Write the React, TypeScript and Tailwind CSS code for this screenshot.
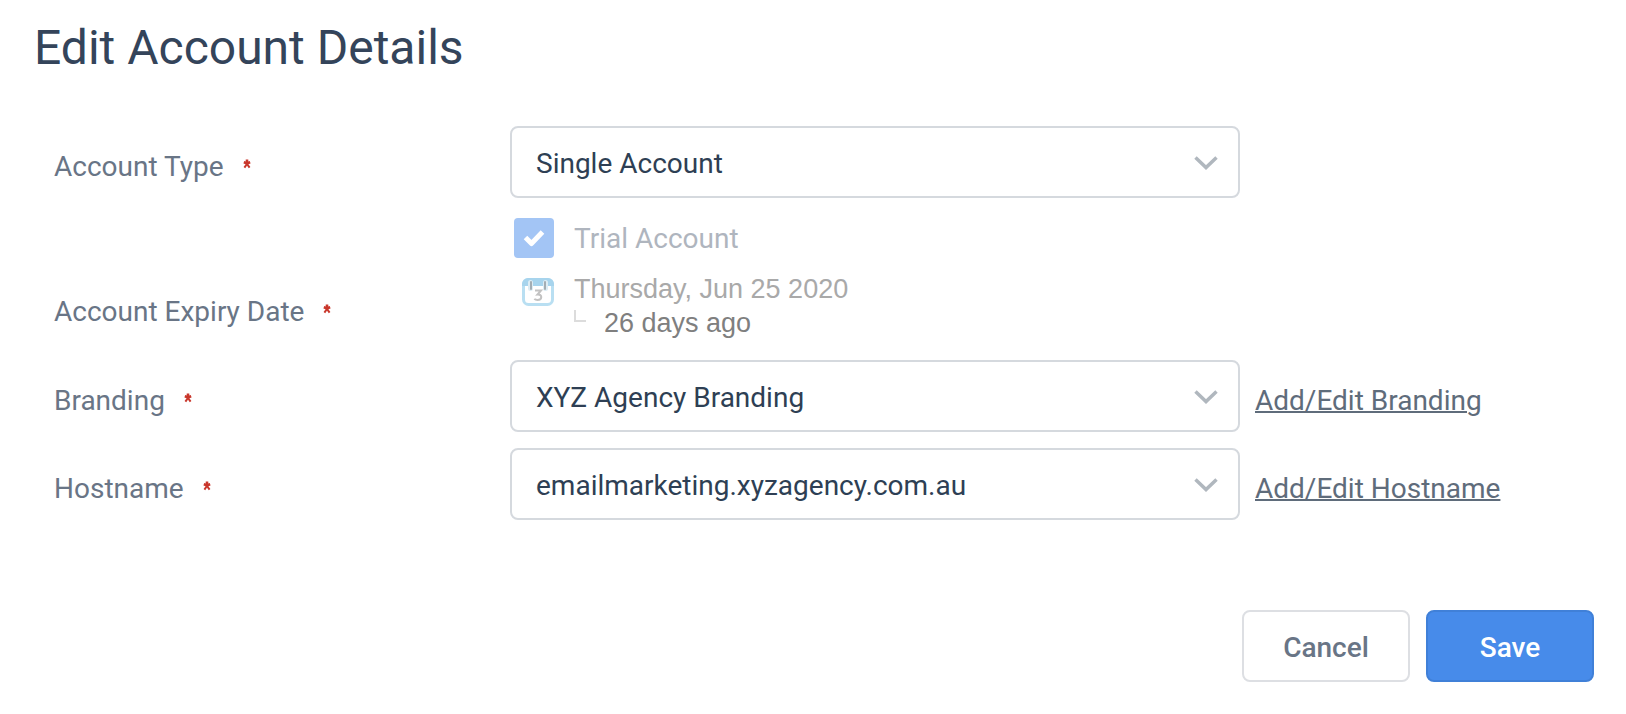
import React, { useState } from 'react';

const ROW = 'grid grid-cols-[456fr_730fr_354fr] items-center';

function Required() {
  return (
    <svg aria-hidden="true" className="mb-1.5 w-2 h-3 text-[#c9372c]" viewBox="0 0 8 12" fill="none" stroke="currentColor">
      <path d="M4 1.500v4.500M0.800 4.300 4 5.300l3.200-1" strokeWidth="2.600" />
      <path d="M1.400 9.600 4 6l2.600 3.600" strokeWidth="2" />
    </svg>
  );
}

function FieldLabel({ htmlFor, children }: { htmlFor?: string; children: React.ReactNode }) {
  return (
    <label htmlFor={htmlFor} className="flex items-center gap-[19px] pt-2.5 text-[#697586]">
      {children}
      <Required />
    </label>
  );
}

function SelectBox({ id, options }: { id: string; options: string[] }) {
  const [value, setValue] = useState(options[0]);

  return (
    <div className="relative">
      <select
        id={id}
        value={value}
        onChange={(e) => setValue(e.target.value)}
        className="appearance-none block w-full h-[72px] pt-1 pl-6 pr-16 rounded-lg border-2 border-[#d5d9de] bg-white text-[#2e3f54] outline-none focus:border-[#478bea]"
      >
        {options.map((option) => (
          <option key={option}>{option}</option>
        ))}
      </select>
      <svg className="absolute right-5 top-7 w-7 h-4 pointer-events-none" viewBox="0 0 28 16" fill="none" stroke="#b0b7be" strokeWidth="3.500">
        <path d="M3.500 3.500 14 13.500 24.500 3.500" />
      </svg>
    </div>
  );
}

function CalendarIcon() {
  return (
    <svg aria-hidden="true" className="w-8 h-7" viewBox="0 0 32 28">
      <rect x="1.500" y="1.500" width="29" height="25" rx="5" fill="#fff" stroke="#b9dff2" strokeWidth="3" />
      <path d="M0 8V6a6 6 0 0 1 6-6h20a6 6 0 0 1 6 6v2Z" fill="#a7d4ed" />
      <path d="M8.500 4.500v6M23.500 4.500v6" stroke="#dcecf4" strokeWidth="5" strokeLinecap="round" />
      <path d="M9 4v7M23 4v7" stroke="#a3adb3" strokeWidth="2" strokeLinecap="round" />
      <path d="M13 12.500h6l-3.500 4c5-.5 5 5.500 0 5.500-1.500 0-2.500-.4-3.200-1.100" fill="none" stroke="#c2c2c2" strokeWidth="2" />
    </svg>
  );
}

export default function App() {
  return (
    <form
      onSubmit={(e) => e.preventDefault()}
      className="min-h-screen bg-white pt-5 pb-8 pr-8 font-['Roboto',sans-serif] text-[28px] leading-8"
    >
      <h1 className="pl-[34px] text-[48px] leading-14 text-[#34445a]">Edit Account Details</h1>

      <div className="mt-[50px] pl-[54px]">
        <div className={ROW}>
          <FieldLabel htmlFor="type">Account Type</FieldLabel>
          <SelectBox id="type" options={['Single Account', 'Agency Account']} />
        </div>

        <div className={`${ROW} mt-5`}>
          <label className="col-start-2 flex items-center gap-5 pl-1 text-[#afb5be]">
            <span className="relative w-10 h-10">
              <input type="checkbox" checked disabled className="appearance-none block w-10 h-10 rounded-sm bg-[#a3c5f5]" />
              <svg className="absolute inset-0 w-10 h-10 pointer-events-none" viewBox="0 0 40 40" fill="none" stroke="#fff" strokeWidth="5" strokeLinejoin="round">
                <path d="M11.500 19.500 17.500 25.500 28.500 14" />
              </svg>
            </span>
            <span className="pt-0.5">Trial Account</span>
          </label>
        </div>

        <div className={`${ROW} mt-3`}>
          <FieldLabel>Account Expiry Date</FieldLabel>
          <div className="flex gap-5 pl-3 pt-0.5 pb-1 font-['Liberation_Sans',sans-serif] text-[27px] leading-[34px]">
            <div className="pt-1.5">
              <CalendarIcon />
            </div>
            <div>
              <p className="text-[#a9a9a9]">Thursday, Jun 25 2020</p>
              <p className="flex gap-[18px] text-[#7f7f7f]">
                <span className="mt-1 w-3 h-3 border-l-2 border-b-2 border-[#dcdcdc]" />
                26 days ago
              </p>
            </div>
          </div>
        </div>

        <div className={`${ROW} mt-4`}>
          <FieldLabel htmlFor="branding">Branding</FieldLabel>
          <SelectBox id="branding" options={['XYZ Agency Branding', 'Default Branding']} />
          <a href="#branding" className="pl-[15px] pt-2.5 text-[#5f6c7b] underline decoration-2">Add/Edit Branding</a>
        </div>

        <div className={`${ROW} mt-4`}>
          <FieldLabel htmlFor="hostname">Hostname</FieldLabel>
          <SelectBox id="hostname" options={['emailmarketing.xyzagency.com.au']} />
          <a href="#hostname" className="pl-[15px] pt-2.5 text-[#5f6c7b] underline decoration-2">Add/Edit Hostname</a>
        </div>
      </div>

      <div className="mt-[90px] flex justify-end gap-4 font-medium">
        <button type="button" className="w-[168px] h-[72px] pt-1 rounded-lg border-2 border-[#dddfe3] bg-white text-[#697586]">
          Cancel
        </button>
        <button type="submit" className="w-[168px] h-[72px] pt-1 rounded-lg border-2 border-[#4080d8] bg-[#478bea] text-white">
          Save
        </button>
      </div>
    </form>
  );
}
